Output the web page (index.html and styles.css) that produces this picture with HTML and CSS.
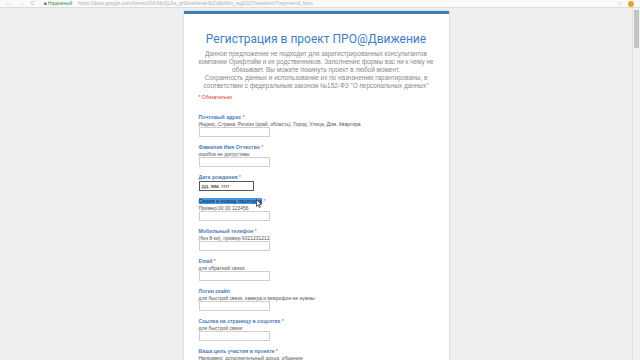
FILE: index.html
```html
<!DOCTYPE html>
<html lang="ru">
<head>
  <meta charset="UTF-8" />
  <meta name="viewport" content="width=device-width, initial-scale=1.0"/>
  <title>Регистрация в проект ПРО@Движение</title>
  <link rel="stylesheet" href="styles.css">
</head>
<body>
  <div class="chrome">
    <span class="nav">&larr; &rarr; C</span>
    <span class="secure">&#9632; Надежный</span>
    <span class="url">https://docs.google.com/forms/d/1FAIpQLSe_pr0dvizhenie3kZq9xWm_reg2017/viewform?usp=send_form</span>
    <span class="star-btn">&#9734;</span>
    <span class="ext"></span>
  </div>
  <div class="window">
    <div class="viewport">
      <div class="card">
        <h1 class="title">Регистрация в проект ПРО@Движение</h1>
        <div class="desc">
          Данное предложение не подходит для зарегистрированных консультантов
          компании Орифлэйм и их родственников. Заполнение формы вас ни к чему не
          обязывает. Вы можете покинуть проект в любой момент.<br>
          Сохранность данных и использование их по назначению гарантированы, в
          соответствии с федеральным законом №152-ФЗ "О персональных данных"
        </div>
        <div class="required-note">* Обязательно</div>

        <div class="field">
          <div class="label">Почтовый адрес <span class="star">*</span></div>
          <div class="help">Индекс, Страна, Регион (край, область), Город, Улица, Дом, Квартира</div>
          <div class="input"></div>
        </div>
        <div class="field">
          <div class="label">Фамилия Имя Отчество <span class="star">*</span></div>
          <div class="help">ошибок не допустимы</div>
          <div class="input"></div>
        </div>
        <div class="field">
          <div class="label">Дата рождения <span class="star">*</span></div>
          <div class="input date">дд. мм. гггг</div>
        </div>
        <div class="field">
          <div class="label">
            <span class="selected">Серия и номер паспорта</span> <span class="star">*</span>
            <svg class="cursor" width="6" height="9" viewBox="0 0 6 9">
              <path d="M0.5 0.5 L0.5 7.5 L2.2 5.9 L3.4 8.5 L4.4 8 L3.3 5.5 L5.5 5.5 Z" fill="#fff" stroke="#222" stroke-width="0.7" stroke-linejoin="round"/>
            </svg>
          </div>
          <div class="help">Пример 00 00 123456</div>
          <div class="input"></div>
        </div>
        <div class="field">
          <div class="label">Мобильный телефон <span class="star">*</span></div>
          <div class="help">(без 8-ки), пример 9021231212</div>
          <div class="input"></div>
        </div>
        <div class="field">
          <div class="label">Email <span class="star">*</span></div>
          <div class="help">для обратной связи</div>
          <div class="input"></div>
        </div>
        <div class="field">
          <div class="label">Логин скайп</div>
          <div class="help">для быстрой связи, камера и микрофон не нужны</div>
          <div class="input"></div>
        </div>
        <div class="field">
          <div class="label">Ссылка на страницу в соцсетях <span class="star">*</span></div>
          <div class="help">для быстрой связи</div>
          <div class="input"></div>
        </div>
        <div class="field">
          <div class="label">Ваша цель участия в проекте <span class="star">*</span></div>
          <div class="help">Например: дополнительный доход, общение</div>
          <div class="input"></div>
        </div>
      </div>
    </div>
    <div class="scrollbar"><div class="thumb"></div></div>
  </div>
</body>
</html>
```

FILE: styles.css
```css
html, body {
  margin: 0;
  padding: 0;
  height: 100%;
  overflow: hidden;
}
body {
  font-family: 'Liberation Sans', Arial, sans-serif;
  background: #efefef;
  display: flex;
  flex-direction: column;
}
.chrome {
  height: 7px;
  flex: none;
  background: #fafafa;
  border-bottom: 1px solid #dcdcdc;
  overflow: hidden;
  display: flex;
  align-items: center;
  gap: 6px;
  padding: 0 6px;
  font-size: 5px;
  line-height: 7px;
  color: #b0b0b0;
  white-space: nowrap;
}
.chrome .nav {
  letter-spacing: 3px;
}
.chrome .secure {
  color: #3a9a4a;
}
.chrome .url {
  flex: 1;
  overflow: hidden;
}
.chrome .ext {
  width: 6px;
  height: 6px;
  border-radius: 50%;
  background: #e8a433;
}
.window {
  flex: 1;
  display: flex;
  min-height: 0;
}
.viewport {
  flex: 1;
  overflow: hidden;
  padding-top: 3px;
}
.scrollbar {
  width: 7px;
  background: #f1f1f1;
  border-left: 1px solid #e2e2e2;
  padding-top: 2px;
}
.thumb {
  margin: 0 1px;
  height: 38px;
  background: #c4c4c4;
}
.card {
  width: 265px;
  margin: 0 auto;
  background: #fff;
  border-top: 3px solid #3c7db8;
  box-shadow: 0 0 2px rgba(0,0,0,0.2);
  padding: 16px 0 0 15px;
  box-sizing: border-box;
  min-height: 400px;
}
.title {
  margin: 0 0 0 -15px;
  font-family: Roboto, 'Liberation Sans', sans-serif;
  font-weight: 400;
  font-size: 12px;
  line-height: 18px;
  color: #3d80c2;
  text-align: center;
  white-space: nowrap;
}
.desc {
  margin: 2px 8px 0 -7px;
  font-size: 6.4px;
  line-height: 8px;
  color: #8a8a8a;
  text-align: center;
}
.required-note {
  margin-top: 4px;
  font-size: 5px;
  line-height: 6px;
  color: #d43a2a;
}
.field {
  margin-top: 14px;
}
.field + .field {
  margin-top: 7px;
}
.label {
  font-size: 5.2px;
  line-height: 6px;
  font-weight: bold;
  color: #4a7cba;
  position: relative;
}
.star {
  color: #d43a2a;
  font-weight: normal;
}
.selected {
  background: #4a97e0;
  color: #1c3f78;
}
.cursor {
  position: absolute;
  left: 57px;
  top: 1px;
}
.help {
  margin-top: 1px;
  font-size: 5px;
  line-height: 6px;
  color: #555;
}
.input {
  width: 71px;
  height: 10px;
  border: 1px solid #cfcfcf;
  box-sizing: border-box;
  background: #fff;
}
.input.date {
  width: 55px;
  margin-top: 1px;
  border-color: #555;
  font-size: 5.5px;
  line-height: 8px;
  padding-left: 2px;
  color: #222;
}
```
